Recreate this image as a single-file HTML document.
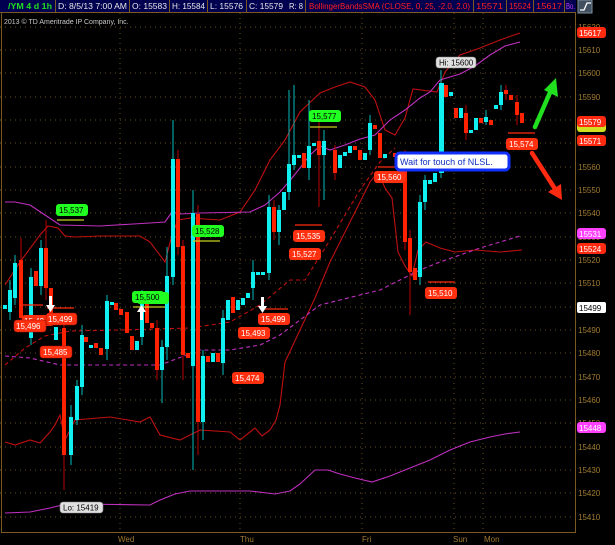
<!DOCTYPE html>
<html><head><meta charset="utf-8"><style>
html,body{margin:0;padding:0;background:#000;width:615px;height:545px;overflow:hidden;font-family:"Liberation Sans",sans-serif}
svg{position:absolute;left:0;top:0}
</style></head><body>
<svg width="615" height="545" viewBox="0 0 615 545" xmlns="http://www.w3.org/2000/svg" font-family="Liberation Sans, sans-serif">
<rect width="615" height="545" fill="#000"/>
<!-- header -->
<rect x="0" y="0" width="576" height="12" fill="#000050"/>
<g stroke="#7a5a20" stroke-width="1">
<line x1="0" y1="12.5" x2="576" y2="12.5"/>
<line x1="55.5" y1="0" x2="55.5" y2="12"/><line x1="129.5" y1="0" x2="129.5" y2="12"/>
<line x1="169.5" y1="0" x2="169.5" y2="12"/><line x1="207.5" y1="0" x2="207.5" y2="12"/>
<line x1="246.5" y1="0" x2="246.5" y2="12"/><line x1="305.5" y1="0" x2="305.5" y2="12"/>
<line x1="473.5" y1="0" x2="473.5" y2="12"/><line x1="506.5" y1="0" x2="506.5" y2="12"/>
<line x1="533.5" y1="0" x2="533.5" y2="12"/><line x1="564.5" y1="0" x2="564.5" y2="12"/>
</g>
<g font-size="8" fill="#e8e8e8">
<text x="8" y="9" fill="#20e020" font-weight="bold" textLength="44" lengthAdjust="spacingAndGlyphs">/YM 4 d 1h</text>
<text x="58" y="9" textLength="69" lengthAdjust="spacingAndGlyphs">D: 8/5/13 7:00 AM</text>
<text x="132" y="9" textLength="35" lengthAdjust="spacingAndGlyphs">O: 15583</text>
<text x="172" y="9" textLength="33" lengthAdjust="spacingAndGlyphs">H: 15584</text>
<text x="210" y="9" textLength="33" lengthAdjust="spacingAndGlyphs">L: 15576</text>
<text x="249" y="9" textLength="34" lengthAdjust="spacingAndGlyphs">C: 15579</text>
<text x="289" y="9" textLength="14" lengthAdjust="spacingAndGlyphs">R: 8</text>
<text x="309" y="9" fill="#ff2020" textLength="161" lengthAdjust="spacingAndGlyphs">BollingerBandsSMA (CLOSE, 0, 25, -2.0, 2.0)</text>
<text x="476" y="9" fill="#ff2020" textLength="27" lengthAdjust="spacingAndGlyphs">15571</text>
<text x="509" y="9" fill="#ff2020" textLength="22" lengthAdjust="spacingAndGlyphs">15524</text>
<text x="536" y="9" fill="#ff2020" textLength="26" lengthAdjust="spacingAndGlyphs">15617</text>
<text x="566" y="9" fill="#c040ff" textLength="9" lengthAdjust="spacingAndGlyphs">Bo.</text>
</g>
<rect x="578" y="0" width="14" height="13" fill="#405060" stroke="#8090a0"/>
<path d="M580 10 L584 10 L587 3 L591 3" stroke="#fff" stroke-width="1.3" fill="none"/>
<text x="4" y="24" font-size="7" fill="#c8c8c8">2013 © TD Ameritrade IP Company, Inc.</text>
<!-- grid -->
<g stroke="#6a5020" stroke-width="1" stroke-dasharray="1,4">
<line x1="0" y1="27" x2="575" y2="27"/><line x1="0" y1="50" x2="575" y2="50"/><line x1="0" y1="73" x2="575" y2="73"/>
<line x1="0" y1="97" x2="575" y2="97"/><line x1="0" y1="120" x2="575" y2="120"/><line x1="0" y1="143" x2="575" y2="143"/>
<line x1="0" y1="167" x2="575" y2="167"/><line x1="0" y1="190" x2="575" y2="190"/><line x1="0" y1="213" x2="575" y2="213"/>
<line x1="0" y1="237" x2="575" y2="237"/><line x1="0" y1="260" x2="575" y2="260"/><line x1="0" y1="283" x2="575" y2="283"/>
<line x1="0" y1="307" x2="575" y2="307"/><line x1="0" y1="330" x2="575" y2="330"/><line x1="0" y1="353" x2="575" y2="353"/>
<line x1="0" y1="377" x2="575" y2="377"/><line x1="0" y1="400" x2="575" y2="400"/><line x1="0" y1="423" x2="575" y2="423"/>
<line x1="0" y1="447" x2="575" y2="447"/><line x1="0" y1="470" x2="575" y2="470"/><line x1="0" y1="493" x2="575" y2="493"/>
<line x1="0" y1="517" x2="575" y2="517"/>
<line x1="120" y1="13" x2="120" y2="532"/><line x1="240" y1="13" x2="240" y2="532"/><line x1="362" y1="13" x2="362" y2="532"/>
<line x1="454" y1="13" x2="454" y2="532"/><line x1="483" y1="13" x2="483" y2="532"/>
</g>
<g stroke="#7a5a20" stroke-width="1"><line x1="1.5" y1="13" x2="1.5" y2="532"/><line x1="575.5" y1="13" x2="575.5" y2="533"/><line x1="1" y1="532.5" x2="576" y2="532.5"/></g>
<g font-size="8" fill="#a07a30">
<text x="578" y="30">15620</text><text x="578" y="53">15610</text><text x="578" y="76">15600</text><text x="578" y="100">15590</text>
<text x="578" y="123">15580</text><text x="578" y="146">15570</text><text x="578" y="170">15560</text><text x="578" y="193">15550</text>
<text x="578" y="216">15540</text><text x="578" y="240">15530</text><text x="578" y="263">15520</text><text x="578" y="286">15510</text>
<text x="578" y="310">15500</text><text x="578" y="333">15490</text><text x="578" y="356">15480</text><text x="578" y="380">15470</text>
<text x="578" y="403">15460</text><text x="578" y="426">15450</text><text x="578" y="450">15440</text><text x="578" y="473">15430</text>
<text x="578" y="496">15420</text><text x="578" y="520">15410</text>
<text x="118" y="542">Wed</text><text x="240" y="542">Thu</text><text x="362" y="542">Fri</text><text x="453" y="542">Sun</text><text x="484" y="542">Mon</text>
</g>
<g font-size="8" fill="#fff">
<rect x="577" y="27" width="29" height="11" rx="3" fill="#ff2a10"/><text x="579" y="36">15617</text>
<rect x="577" y="121" width="29" height="11" rx="3" fill="#d0e020"/>
<rect x="577" y="116" width="29" height="11" rx="3" fill="#ff2a10"/><text x="579" y="125">15579</text>
<rect x="577" y="135" width="29" height="11" rx="3" fill="#ff2a10"/><text x="579" y="144">15571</text>
<rect x="577" y="228" width="29" height="11" rx="3" fill="#ff40ff"/><text x="579" y="237">15531</text>
<rect x="577" y="243" width="29" height="11" rx="3" fill="#ff2a10"/><text x="579" y="252">15524</text>
<rect x="577" y="302" width="29" height="11" rx="2" fill="#fff"/><text x="579" y="311" fill="#000">15499</text>
<rect x="577" y="422" width="29" height="11" rx="3" fill="#ff40ff"/><text x="579" y="431">15448</text>
</g>
<!-- bands -->
<g fill="none" stroke-width="1.1">
<polyline stroke="#c01010" points="5,285 20,262 40,235 48,226 58,228 65,236 75,237 100,236 140,236 150,242 165,262 172,235 178,220 190,218 220,220 240,212 255,190 270,160 285,140 300,112 320,93 335,87 350,82 365,87 375,100 385,130 395,135 405,118 413,89 437,92 445,72 460,55 480,48 500,40 520,33"/>
<polyline stroke="#c030c0" points="5,202 15,202 30,205 45,215 60,225 100,226 150,223 165,222 172,212 180,214 200,213 250,212 265,205 280,192 292,178 300,168 310,155 320,146 330,150 345,145 360,139 375,135 390,120 405,110 420,98 430,92 440,80 460,74 475,66 490,55 505,46 520,42"/>
<polyline stroke="#c01010" points="5,442 15,445 30,440 40,443 50,432 55,425 60,415 65,440 75,420 110,417 140,422 150,417 160,435 180,440 200,430 230,432 240,440 255,428 262,436 270,430 276,420 280,405 285,362 300,330 315,298 330,262 345,232 360,202 370,182 378,172 385,188 392,198 398,252 405,266 412,276 418,250 426,242 440,248 455,252 475,250 500,252 522,250"/>
<polyline stroke="#c030c0" points="5,513 30,512 50,508 62,505 80,504 150,505 160,500 175,494 190,491 250,491 275,494 290,491 300,484 315,470 328,470 340,474 355,478 372,482 390,476 410,468 430,460 450,450 470,442 490,437 505,434 520,432"/>
<polyline stroke="#c01010" stroke-dasharray="4,3" points="5,365 25,348 45,336 70,331 120,330 190,328 230,322 260,305 290,280 305,280 330,240 345,215 360,190 380,162 395,148"/>
<polyline stroke="#c030c0" stroke-dasharray="4,3" points="5,356 30,358 60,365 160,365 200,350 230,350 260,345 280,335 300,320 320,305 340,300 360,295 380,290 400,280 420,270 440,262 460,255 480,248 500,242 520,236"/>
</g>
<!-- wicks -->
<g stroke="#0bb" stroke-width="1">
<line x1="10" y1="280" x2="10" y2="320"/><line x1="15" y1="255" x2="15" y2="305"/><line x1="31" y1="268" x2="31" y2="345"/><line x1="41" y1="240" x2="41" y2="295"/>
<line x1="71" y1="405" x2="71" y2="465"/><line x1="77" y1="380" x2="77" y2="425"/><line x1="82" y1="325" x2="82" y2="395"/>
<line x1="107" y1="295" x2="107" y2="360"/><line x1="142" y1="290" x2="142" y2="345"/><line x1="162" y1="340" x2="162" y2="403"/>
<line x1="167" y1="247" x2="167" y2="360"/><line x1="173" y1="120" x2="173" y2="285"/><line x1="193" y1="190" x2="193" y2="470"/>
<line x1="203" y1="350" x2="203" y2="440"/><line x1="223" y1="310" x2="223" y2="375"/><line x1="253" y1="260" x2="253" y2="300"/>
<line x1="269" y1="195" x2="269" y2="280"/><line x1="279" y1="205" x2="279" y2="245"/><line x1="289" y1="90" x2="289" y2="200"/>
<line x1="294" y1="85" x2="294" y2="170"/><line x1="309" y1="100" x2="309" y2="180"/><line x1="324" y1="130" x2="324" y2="200"/>
<line x1="370" y1="115" x2="370" y2="155"/><line x1="420" y1="195" x2="420" y2="285"/><line x1="425" y1="175" x2="425" y2="210"/>
<line x1="441" y1="70" x2="441" y2="178"/><line x1="486" y1="110" x2="486" y2="125"/><line x1="501" y1="85" x2="501" y2="110"/>
</g>
<g stroke="#b00" stroke-width="1">
<line x1="21" y1="238" x2="21" y2="330"/><line x1="46" y1="220" x2="46" y2="300"/><line x1="64" y1="320" x2="64" y2="490"/>
<line x1="157" y1="320" x2="157" y2="380"/><line x1="178" y1="150" x2="178" y2="255"/><line x1="183" y1="240" x2="183" y2="380"/>
<line x1="198" y1="205" x2="198" y2="455"/><line x1="274" y1="200" x2="274" y2="240"/><line x1="319" y1="120" x2="319" y2="207"/>
<line x1="335" y1="145" x2="335" y2="180"/><line x1="405" y1="150" x2="405" y2="250"/><line x1="410" y1="230" x2="410" y2="315"/>
<line x1="466" y1="105" x2="466" y2="140"/><line x1="506" y1="85" x2="506" y2="100"/><line x1="517" y1="95" x2="517" y2="125"/>
</g>
<!-- cyan bodies -->
<g fill="#10f0f0">
<rect x="3" y="305" width="4" height="4"/><rect x="8" y="290" width="4" height="22"/><rect x="13" y="263" width="4" height="35"/>
<rect x="29" y="277" width="4" height="61"/><rect x="39" y="248" width="4" height="38"/><rect x="54" y="327" width="4" height="13"/>
<rect x="69" y="417" width="4" height="38"/><rect x="75" y="386" width="4" height="34"/><rect x="80" y="335" width="4" height="52"/>
<rect x="89" y="345" width="4" height="3"/><rect x="105" y="301" width="4" height="48"/><rect x="110" y="302" width="4" height="3"/>
<rect x="135" y="341" width="4" height="9"/><rect x="140" y="300" width="4" height="37"/><rect x="160" y="347" width="4" height="23"/>
<rect x="165" y="276" width="4" height="71"/><rect x="171" y="159" width="4" height="118"/><rect x="191" y="213" width="4" height="153"/>
<rect x="201" y="356" width="4" height="66"/><rect x="211" y="353" width="4" height="9"/><rect x="221" y="318" width="4" height="45"/>
<rect x="226" y="300" width="4" height="20"/><rect x="236" y="300" width="4" height="10"/><rect x="241" y="298" width="4" height="7"/>
<rect x="246" y="293" width="4" height="5"/><rect x="251" y="272" width="4" height="16"/><rect x="256" y="272" width="4" height="3"/>
<rect x="261" y="272" width="4" height="3"/><rect x="267" y="207" width="4" height="66"/><rect x="277" y="210" width="4" height="22"/>
<rect x="282" y="192" width="4" height="18"/><rect x="287" y="164" width="4" height="28"/><rect x="292" y="155" width="4" height="10"/>
<rect x="297" y="155" width="4" height="3"/><rect x="307" y="146" width="4" height="22"/><rect x="312" y="143" width="4" height="3"/>
<rect x="322" y="141" width="4" height="14"/><rect x="338" y="155" width="4" height="13"/><rect x="343" y="152" width="4" height="4"/>
<rect x="348" y="146" width="4" height="7"/><rect x="363" y="153" width="4" height="7"/><rect x="368" y="123" width="4" height="27"/>
<rect x="383" y="154" width="4" height="4"/><rect x="418" y="202" width="4" height="75"/><rect x="423" y="180" width="4" height="22"/>
<rect x="428" y="180" width="4" height="4"/><rect x="433" y="173" width="4" height="9"/><rect x="439" y="83" width="5" height="90"/>
<rect x="449" y="92" width="4" height="4"/><rect x="459" y="108" width="4" height="10"/><rect x="469" y="130" width="4" height="3"/>
<rect x="474" y="118" width="4" height="12"/><rect x="484" y="117" width="4" height="5"/><rect x="494" y="105" width="4" height="4"/>
<rect x="499" y="92" width="4" height="13"/>
</g>
<!-- red bodies -->
<g fill="#ff2200">
<rect x="19" y="260" width="4" height="58"/><rect x="24" y="318" width="4" height="12"/><rect x="34" y="271" width="4" height="15"/>
<rect x="44" y="248" width="4" height="40"/><rect x="49" y="288" width="4" height="30"/><rect x="62" y="328" width="4" height="127"/>
<rect x="84" y="337" width="4" height="5"/><rect x="94" y="343" width="4" height="5"/><rect x="99" y="348" width="4" height="7"/>
<rect x="114" y="303" width="4" height="7"/><rect x="119" y="309" width="4" height="6"/><rect x="125" y="312" width="4" height="21"/>
<rect x="130" y="336" width="4" height="14"/><rect x="145" y="303" width="4" height="20"/><rect x="150" y="323" width="4" height="5"/>
<rect x="155" y="328" width="4" height="42"/><rect x="176" y="159" width="4" height="88"/><rect x="181" y="246" width="4" height="109"/>
<rect x="186" y="353" width="4" height="5"/><rect x="196" y="214" width="4" height="208"/><rect x="206" y="356" width="4" height="6"/>
<rect x="216" y="353" width="4" height="9"/><rect x="231" y="297" width="4" height="16"/><rect x="272" y="207" width="4" height="25"/>
<rect x="302" y="153" width="4" height="15"/><rect x="317" y="141" width="4" height="14"/><rect x="333" y="150" width="4" height="23"/>
<rect x="353" y="146" width="4" height="4"/><rect x="358" y="150" width="4" height="10"/><rect x="373" y="125" width="4" height="4"/>
<rect x="378" y="133" width="4" height="25"/><rect x="393" y="153" width="4" height="4"/><rect x="403" y="163" width="4" height="79"/>
<rect x="408" y="238" width="4" height="34"/><rect x="413" y="268" width="4" height="12"/><rect x="444" y="85" width="4" height="12"/>
<rect x="454" y="108" width="4" height="10"/><rect x="464" y="113" width="4" height="20"/><rect x="479" y="118" width="4" height="5"/>
<rect x="489" y="120" width="4" height="5"/><rect x="504" y="90" width="4" height="4"/><rect x="509" y="95" width="4" height="5"/>
<rect x="515" y="102" width="4" height="13"/><rect x="520" y="113" width="4" height="10"/>
</g>
<!-- level lines -->
<g stroke-width="1.3">
<line x1="57" y1="220" x2="84" y2="220" stroke="#c8d020"/><line x1="193" y1="241" x2="220" y2="241" stroke="#c8d020"/>
<line x1="133" y1="307" x2="165" y2="307" stroke="#c8d020"/><line x1="310" y1="127" x2="337" y2="127" stroke="#c8d020"/>
<line x1="47" y1="308" x2="74" y2="308" stroke="#ff2a10"/><line x1="263" y1="309" x2="288" y2="309" stroke="#ff2a10"/>
<line x1="295" y1="225" x2="322" y2="225" stroke="#ff2a10"/><line x1="428" y1="282" x2="455" y2="282" stroke="#ff2a10"/>
<line x1="508" y1="133" x2="535" y2="133" stroke="#ff2a10"/><line x1="378" y1="167" x2="400" y2="167" stroke="#ff2a10"/>
<line x1="20" y1="305" x2="43" y2="305" stroke="#ff2a10"/>
</g>
<!-- white arrows -->
<g fill="#fff">
<path d="M49 296h3v9h3l-4.5 7-4.5-7h3z"/><path d="M261 297h3v9h3l-4.5 7-4.5-7h3z"/><path d="M140 320h3v-8h3l-4.5-7-4.5 7h3z"/>
</g>
<!-- labels -->
<g font-size="8" fill="#fff">
<rect x="22" y="315" width="32" height="11" rx="3" fill="#ff3010"/><text x="24" y="324">15,49</text>
<rect x="14" y="320" width="32" height="12" rx="3" fill="#ff3010" stroke="#a01000" stroke-width=".6"/><text x="16" y="329">15,496</text>
<rect x="46" y="313" width="31" height="12" rx="3" fill="#ff3010" stroke="#a01000" stroke-width=".6"/><text x="48" y="322">15,499</text>
<rect x="40" y="346" width="32" height="12" rx="3" fill="#ff3010" stroke="#a01000" stroke-width=".6"/><text x="43" y="355">15,485</text>
<rect x="232" y="372" width="32" height="12" rx="3" fill="#ff3010"/><text x="235" y="381">15,474</text>
<rect x="238" y="327" width="32" height="12" rx="3" fill="#ff3010"/><text x="241" y="336">15,493</text>
<rect x="258" y="313" width="32" height="12" rx="3" fill="#ff3010"/><text x="261" y="322">15,499</text>
<rect x="293" y="230" width="32" height="12" rx="3" fill="#ff3010"/><text x="296" y="239">15,535</text>
<rect x="289" y="248" width="32" height="12" rx="3" fill="#ff3010"/><text x="292" y="257">15,527</text>
<rect x="374" y="171" width="32" height="12" rx="3" fill="#ff3010"/><text x="377" y="180">15,560</text>
<rect x="425" y="287" width="32" height="12" rx="3" fill="#ff3010"/><text x="428" y="296">15,510</text>
<rect x="506" y="138" width="32" height="12" rx="3" fill="#ff3010"/><text x="509" y="147">15,574</text>
<g fill="#000">
<rect x="56" y="204" width="32" height="12" rx="3" fill="#20ff20"/><text x="59" y="213">15,537</text>
<rect x="192" y="225" width="32" height="12" rx="3" fill="#20ff20"/><text x="195" y="234">15,528</text>
<rect x="137" y="292" width="32" height="12" rx="3" fill="#20ff20"/>
<rect x="132" y="291" width="32" height="12" rx="3" fill="#20ff20"/><text x="135" y="300">15,500</text>
<rect x="309" y="110" width="32" height="12" rx="3" fill="#20ff20"/><text x="312" y="119">15,577</text>
<rect x="436" y="57" width="40" height="11" rx="3" fill="#e0e0e0" stroke="#888" stroke-width=".6"/><text x="439" y="65.5">Hi: 15600</text>
<rect x="60" y="502" width="43" height="11" rx="3" fill="#e0e0e0" stroke="#888" stroke-width=".6"/><text x="63" y="510.5">Lo: 15419</text>
</g>
</g>
<!-- callout -->
<rect x="396" y="153" width="113" height="17" rx="4" fill="#fff" stroke="#1030ff" stroke-width="3"/>
<text x="400" y="165" font-size="9" fill="#1030c0">Wait for touch of NLSL.</text>
<!-- big arrows -->
<g stroke-linecap="round" stroke-width="4.5" fill="none">
<line x1="535" y1="127" x2="552" y2="88" stroke="#20e020"/>
<line x1="532" y1="153" x2="557" y2="192" stroke="#ff2a10"/>
</g>
<path d="M556 78 L558 97 L544 90 Z" fill="#20e020"/>
<path d="M562 200 L548 192 L561 184 Z" fill="#ff2a10"/>
</svg>
</body></html>
